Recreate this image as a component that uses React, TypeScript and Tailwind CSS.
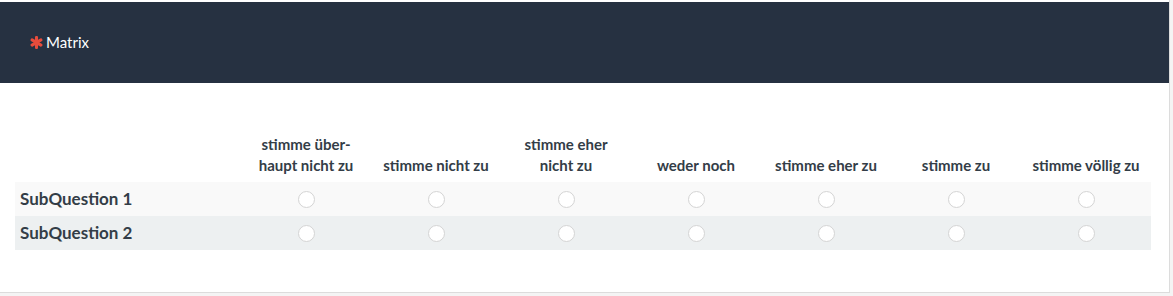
import React from 'react';

const options = [
  ['stimme über-', 'haupt nicht zu'],
  ['stimme nicht zu'],
  ['stimme eher', 'nicht zu'],
  ['weder noch'],
  ['stimme eher zu'],
  ['stimme zu'],
  ['stimme völlig zu'],
];

const rows = ['SubQuestion 1', 'SubQuestion 2'];

function Radio() {
  return <span className="block h-[17px] w-[17px] rounded-full border border-[#d4d4d4] bg-white" />;
}

function Asterisk() {
  return (
    <svg width="13" height="13" viewBox="0 0 12 12" className="text-[#e74c3c]">
      <g stroke="currentColor" strokeWidth="2.8" strokeLinecap="round">
        <line x1="6" y1="1.3" x2="6" y2="10.7" />
        <line x1="1.9" y1="3.6" x2="10.1" y2="8.4" />
        <line x1="1.9" y1="8.4" x2="10.1" y2="3.6" />
      </g>
    </svg>
  );
}

export default function App() {
  return (
    <div className="h-[296px] w-[1173px] bg-[#f4f4f4] font-['Lato','Liberation_Sans',sans-serif]">
      <div className="h-[293px] w-[1170px] border-r border-b border-[#dcdcdc] bg-white pt-[2px]">
        {/* Question header */}
        <div className="flex h-[81px] items-center bg-[#263141] pl-[30px]">
          <Asterisk />
          <span className="ml-[3px] text-[15px] text-white">Matrix</span>
        </div>

        {/* Matrix */}
        <div className="pl-[15px] pt-[51px]">
          <div className="grid grid-cols-[226px_repeat(7,130px)] font-bold text-[#333d47]">
            <div />
            {options.map((lines, i) => (
              <div
                key={i}
                className="flex flex-col items-center justify-end pb-[6px] text-center text-[15px] leading-[21px]"
              >
                {lines.map((l) => (
                  <span key={l}>{l}</span>
                ))}
              </div>
            ))}
            {rows.map((r, ri) => (
              <React.Fragment key={r}>
                <div
                  className={`flex h-[34px] items-center pl-[5px] text-[17px] ${ri === 0 ? 'bg-[#f9f9f9]' : 'bg-[#edf0f1]'}`}
                >
                  {r}
                </div>
                {options.map((_, ci) => (
                  <div
                    key={ci}
                    className={`flex h-[34px] items-center justify-center ${ri === 0 ? 'bg-[#f9f9f9]' : 'bg-[#edf0f1]'}`}
                  >
                    <Radio />
                  </div>
                ))}
              </React.Fragment>
            ))}
          </div>
        </div>
      </div>
    </div>
  );
}
